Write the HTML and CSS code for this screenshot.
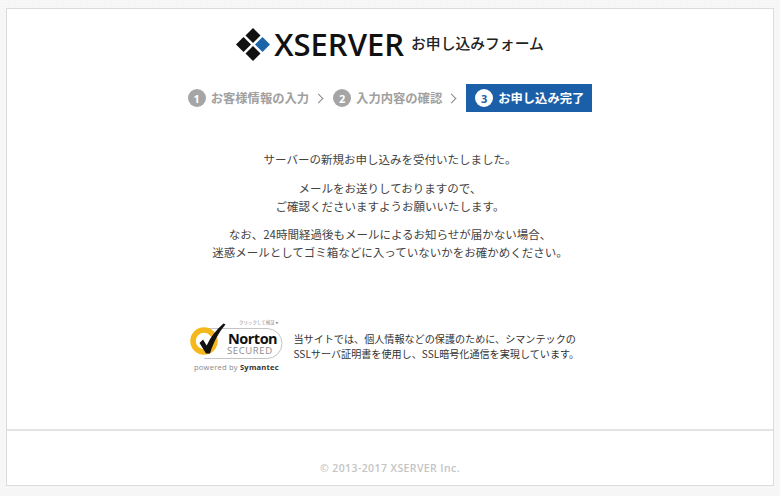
FILE: index.html
```html
<!DOCTYPE html>
<html lang="ja">
<head>
<meta charset="utf-8">
<title>お申し込みフォーム</title>
<link rel="stylesheet" href="styles.css">
</head>
<body>
<div class="card">
  <main class="main">
    <header class="logo">
      <svg class="mark" width="34" height="33" viewBox="0 0 34 33">
        <polygon points="17,0 24.500,7.500 17,15 9.500,7.500" fill="#111"/>
        <polygon points="7.500,9 15,16.500 7.500,24 0,16.500" fill="#111"/>
        <polygon points="26.500,9 34,16.500 26.500,24 19,16.500" fill="#1b64a8"/>
        <polygon points="17,18 24.500,25.500 17,33 9.500,25.500" fill="#111"/>
      </svg>
      <span class="brand">XSERVER</span>
      <span class="formname">お申し込みフォーム</span>
    </header>
    <ol class="steps">
      <li class="step"><span class="num">1</span>お客様情報の入力</li>
      <li class="sep"></li>
      <li class="step"><span class="num">2</span>入力内容の確認</li>
      <li class="sep"></li>
      <li class="step current"><span class="num">3</span>お申し込み完了</li>
    </ol>
    <section class="message">
      <p>サーバーの新規お申し込みを受付いたしました。</p>
      <p>メールをお送りしておりますので、<br>ご確認くださいますようお願いいたします。</p>
      <p>なお、24時間経過後もメールによるお知らせが届かない場合、<br>迷惑メールとしてゴミ箱などに入っていないかをお確かめください。</p>
    </section>
    <section class="ssl">
      <svg class="norton" width="94" height="58" viewBox="0 0 94 58">
        <text x="49" y="7" class="n-click">クリックして検証 ▸</text>
        <path d="M14 11.500 H77 A15 15 0 0 1 92 26.500 A15 15 0 0 1 77 41.500 H14" fill="#fff" stroke="#c4c4c4" stroke-width="1"/>
        <circle cx="14" cy="24" r="11" fill="#fff" stroke="#f4b81c" stroke-width="5.500"/>
        <path d="M9.500 26 L13 22.500 L16.700 28.500 C20.500 20 26.500 12.500 33.500 6.500 L35.500 7.500 C29 15 23.500 25 20 36.500 L16 36.500 Z" fill="#111"/>
        <text x="38" y="27" class="n-name">Norton</text>
        <text x="37" y="37" class="n-sec">SECURED</text>
        <text x="4" y="53" class="n-pow">powered by <tspan class="n-sym">Symantec</tspan></text>
      </svg>
      <p class="ssltext">当サイトでは、個人情報などの保護のために、シマンテックの<br>SSLサーバ証明書を使用し、SSL暗号化通信を実現しています。</p>
    </section>
  </main>
  <footer class="foot">© 2013-2017 XSERVER Inc.</footer>
</div>
</body>
</html>
```
FILE: styles.css
```css
* { box-sizing: border-box; }
html, body { margin: 0; height: 100%; }
body {
  padding: 8px 6px 10px 6px;
  background-color: #f6f6f6;
  background-image: radial-gradient(#fbfbfb 0.6px, transparent 0.8px);
  background-size: 3px 3px;
  font-family: "Noto Sans CJK JP", "Noto Sans", sans-serif;
  color: #333;
}
.card {
  height: 478px;
  background: #fff;
  border: 1px solid #dcdcdc;
  display: flex;
  flex-direction: column;
}
.main { flex: 1; min-height: 0; display: flex; flex-direction: column; align-items: center; border-bottom: 2px solid #e4e4e4; }
.logo { display: flex; align-items: center; margin-top: 18px; height: 34px; }
.mark { margin-right: 4px; }
.brand {
  font-family: "Open Sans", sans-serif;
  font-weight: 600;
  font-size: 31px;
  line-height: 34px;
  color: #111;
  margin-right: 7px;
}
.formname { font-size: 14.800px; font-weight: 500; color: #222; line-height: 32px; padding-bottom: 3px; }
.steps { list-style: none; margin: 23px 0 0; padding: 0; display: flex; align-items: center; height: 28px; }
.step { display: flex; align-items: center; font-size: 12.300px; font-weight: 700; color: #a0a0a0; height: 28px; white-space: nowrap; }
.num {
  width: 18px; height: 18px; border-radius: 50%;
  background: #a5a5a5; color: #fff;
  font-family: "Open Sans", sans-serif; font-size: 11px; font-weight: 700;
  display: flex; align-items: center; justify-content: center;
  margin-right: 5px;
}
.sep { width: 7px; height: 7px; border-top: 1.500px solid #888; border-right: 1.500px solid #888; transform: rotate(45deg); margin: 0 11px 0 6px; }
.current { background: #1b5fa8; color: #fff; padding: 0 8px 0 9px; margin-left: 0; }
.current .num { background: #fff; color: #1b5fa8; }
.message { margin-top: 38px; text-align: center; font-size: 11.500px; line-height: 18px; color: #444; }
.message p { margin: 0 0 10.500px; }
.ssl { display: flex; align-items: center; margin-top: 45px; width: 401px; }
.norton { display: block; flex: none; margin-right: 10px; }
.ssltext { margin: 0; font-size: 10.100px; line-height: 15px; color: #333; white-space: nowrap; }
.n-click { font-size: 4.500px; fill: #888; }
.n-name { font-family: "Open Sans", sans-serif; font-weight: 700; font-size: 14.500px; fill: #111; letter-spacing: -0.500px; }
.n-sec { font-family: "Open Sans", sans-serif; font-size: 9.500px; fill: #8a8a8a; letter-spacing: 0.600px; }
.n-pow { font-family: "Open Sans", sans-serif; font-size: 7.600px; fill: #888; letter-spacing: 0.200px; }
.n-sym { font-weight: 700; fill: #333; }
.foot { height: 54px; flex: none; display: flex; align-items: center; justify-content: center; font-family: "Open Sans", sans-serif; font-size: 10.500px; font-weight: 600; color: #c4c4c4; letter-spacing: 0.400px; padding-top: 20px; }
```
